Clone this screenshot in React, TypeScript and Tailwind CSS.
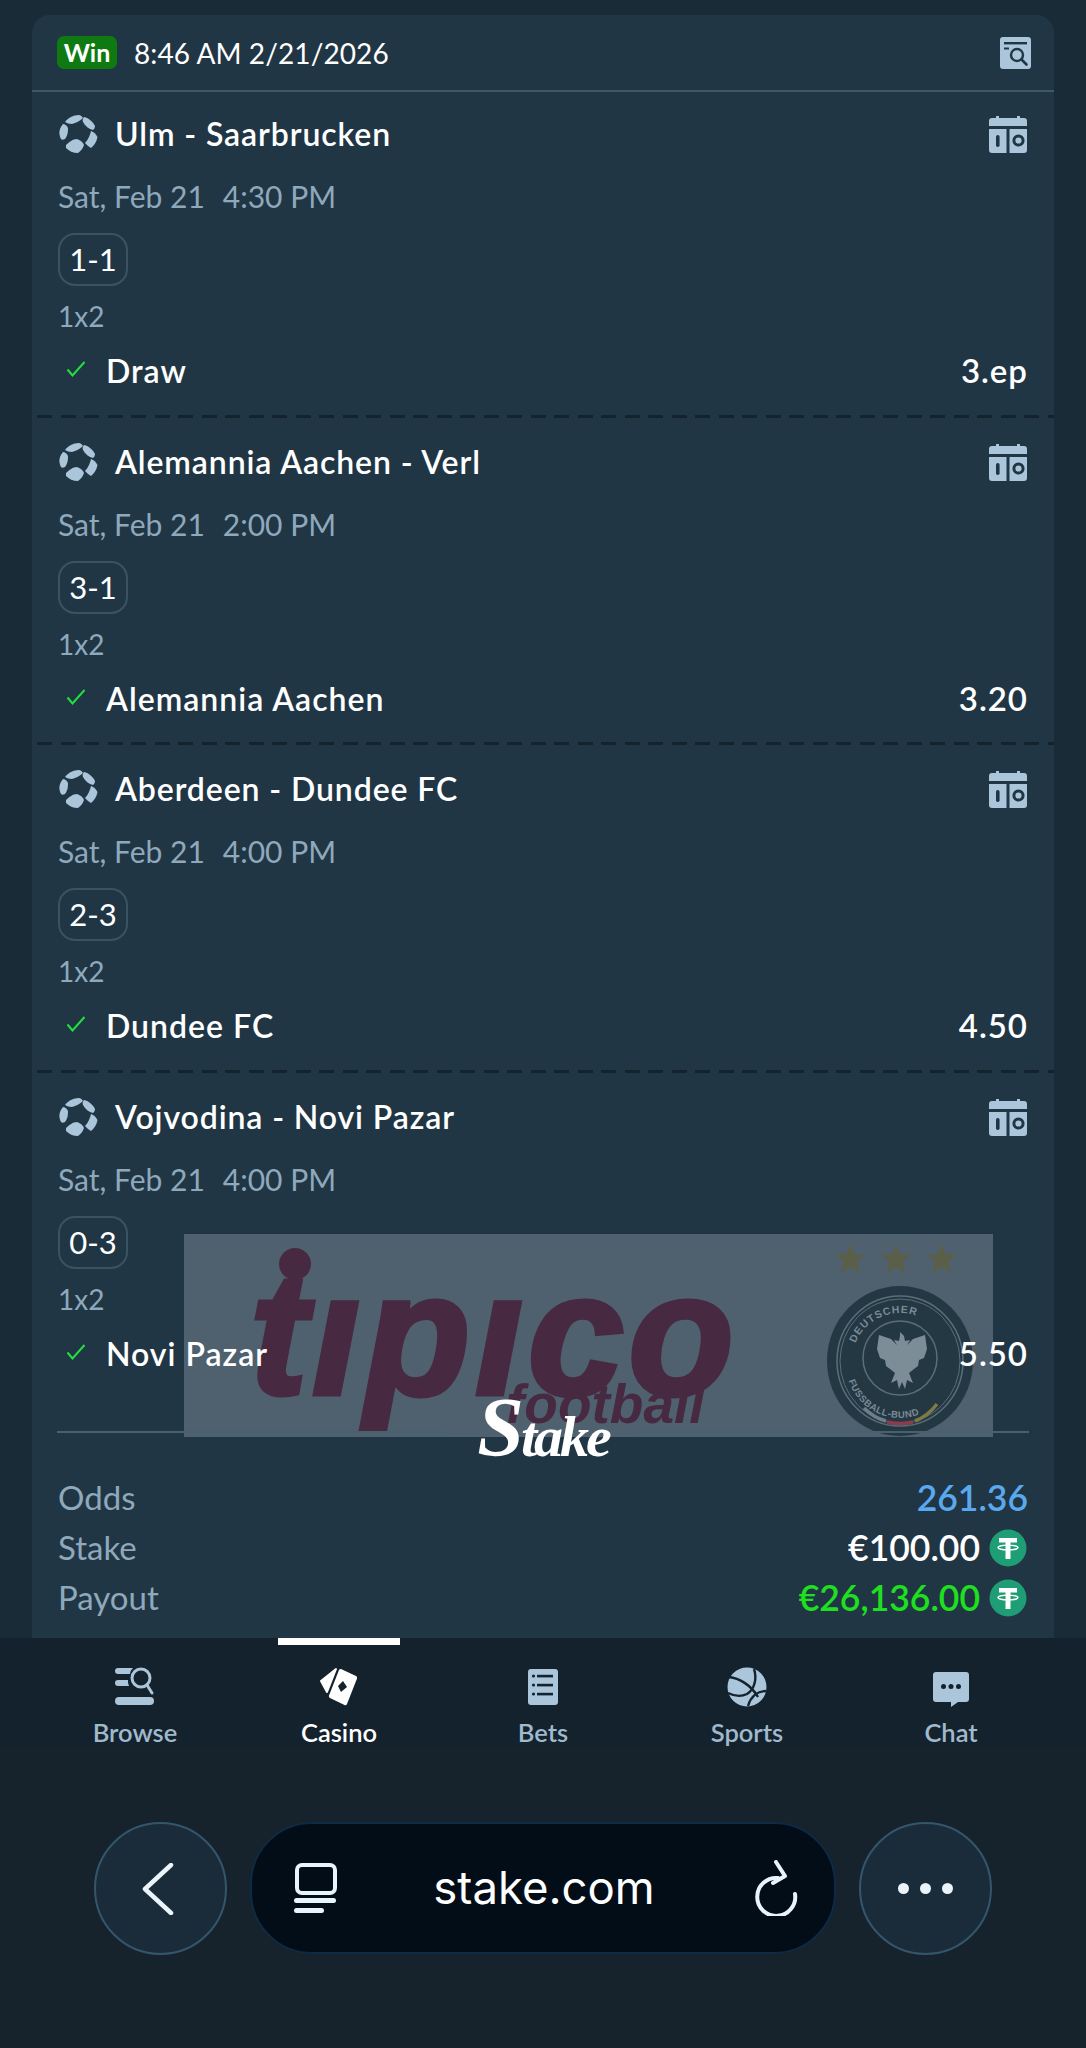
const font = "[font-family:Lato,'Noto_Sans',sans-serif]";

const bets = [
  { title: "Ulm - Saarbrucken", time: "4:30 PM", score: "1-1", pick: "Draw", odds: "3.ep" },
  { title: "Alemannia Aachen - Verl", time: "2:00 PM", score: "3-1", pick: "Alemannia Aachen", odds: "3.20" },
  { title: "Aberdeen - Dundee FC", time: "4:00 PM", score: "2-3", pick: "Dundee FC", odds: "4.50" },
  { title: "Vojvodina - Novi Pazar", time: "4:00 PM", score: "0-3", pick: "Novi Pazar", odds: "5.50" },
];

function SoccerBall() {
  return (
    <svg width="40" height="40" viewBox="0 0 40 40" className="shrink-0">
      <g fill="#abc5da">
        <path d="M7 8c3-4 8-7 14-7 1 0 3 1 4 3-3 3-7 5-11 6-3 0-5-1-7-2z" />
        <path d="M26 3c5 1 9 5 11 9 0 2-1 3-2 4-4-1-8-4-10-8-1-2 0-4 1-5z" />
        <path d="M33 17c3 1 5 3 6.500 6-1 5-3 8-6.500 11-2-1-4-3-6-5 3-3 5-8 6-12z" />
        <path d="M8 31c3-3 7-6 11-6 3 1 6 3 7 6-1 3-3 6-6 8-5 0-9-2-12-5z" />
        <path d="M5 10c2 0 4 2 5 4 0 3 0 7-3 11-2 1-3 1-4 0-2-4-3-9 2-15z" />
      </g>
    </svg>
  );
}

function CalendarScore() {
  return (
    <svg width="40" height="40" viewBox="0 0 40 40" className="shrink-0">
      <path d="M8 2h3v2h18V2h3v2h4a3 3 0 0 1 3 3v5H1V7a3 3 0 0 1 3-3h4z" fill="#abc5da" />
      <path d="M1 15h17.500v24H4a3 3 0 0 1-3-3z" fill="#abc5da" />
      <path d="M21.500 15H39v21a3 3 0 0 1-3 3H21.500z" fill="#abc5da" />
      <rect x="8" y="21" width="3.600" height="12" rx="1.800" fill="#213644" />
      <circle cx="30.500" cy="26.500" r="4.600" fill="none" stroke="#213644" strokeWidth="3" />
    </svg>
  );
}

function ReceiptSearch() {
  return (
    <svg width="31" height="32" viewBox="0 0 31 32">
      <rect width="31" height="32" rx="3" fill="#abc5da" />
      <rect x="4" y="5" width="23" height="2.400" fill="#213644" />
      <rect x="4" y="10.500" width="5" height="2" fill="#213644" />
      <circle cx="17" cy="18" r="6" fill="none" stroke="#213644" strokeWidth="2.400" />
      <path d="M21.500 22.500l5 5" stroke="#213644" strokeWidth="2.600" strokeLinecap="round" />
    </svg>
  );
}

function Tether() {
  return (
    <svg width="38" height="38" viewBox="0 0 38 38" className="shrink-0 mr-[1px]">
      <circle cx="19" cy="19" r="18.500" fill="#1f9e75" />
      <path d="M10 9h18v4.500h-6.500V30h-5V13.500H10z" fill="#fff" />
      <ellipse cx="19" cy="18.500" rx="10" ry="2.400" fill="none" stroke="#fff" strokeWidth="1.400" />
    </svg>
  );
}

function BrowseIcon() {
  return (
    <svg width="40" height="40" viewBox="0 0 40 40">
      <g fill="#abc5da">
        <path d="M3 1h15a9 9 0 0 0-3 6H3a3 3 0 0 1 0-6z" />
        <path d="M3 13h10a12 12 0 0 0 1 6H3a3 3 0 0 1 0-6z" />
        <rect x="0" y="30" width="39" height="8" rx="4" />
      </g>
      <circle cx="26" cy="11" r="9" fill="none" stroke="#abc5da" strokeWidth="3" />
      <path d="M32 18l5 8" stroke="#abc5da" strokeWidth="3" strokeLinecap="round" />
    </svg>
  );
}

function CasinoIcon() {
  return (
    <svg width="40" height="40" viewBox="0 0 40 40">
      <path d="M2 14L17 2 8 25z" fill="#fff" stroke="#fff" strokeWidth="2" strokeLinejoin="round" />
      <path d="M22 2l15 7a2 2 0 0 1 1 2.500L28 37a2 2 0 0 1-2.500 1L11 31a2 2 0 0 1-1-2.500L20 3a2 2 0 0 1 2-1z" fill="#fff" />
      <path d="M24 14l4 6-6 5-3-6z" fill="#14222e" />
    </svg>
  );
}

function BetsIcon() {
  return (
    <svg width="40" height="40" viewBox="0 0 40 40">
      <rect x="5" y="2" width="30" height="36" rx="3" fill="#abc5da" />
      <g fill="#14222e">
        <circle cx="10.500" cy="9" r="1.600" />
        <circle cx="10.500" cy="18" r="1.600" />
        <circle cx="10.500" cy="27" r="1.600" />
        <rect x="14" y="7.800" width="16" height="2.600" />
        <rect x="14" y="16.800" width="16" height="2.600" />
        <rect x="14" y="25.800" width="16" height="2.600" />
      </g>
    </svg>
  );
}

function SportsIcon() {
  return (
    <svg width="40" height="40" viewBox="0 0 40 40">
      <circle cx="20" cy="20" r="19.500" fill="#abc5da" />
      <g fill="none" stroke="#14222e" strokeWidth="2.400">
        <path d="M2 10c10 1 22 8 29 20" />
        <path d="M27 2c3 9 1 20-7 25-6 3-13 2-19-1" />
        <path d="M39 24c-8 0-15 5-18 15" />
      </g>
    </svg>
  );
}

function ChatIcon() {
  return (
    <svg width="40" height="40" viewBox="0 0 40 40">
      <path d="M5 5h30a3 3 0 0 1 3 3v24a3 3 0 0 1-3 3h-8l-7 5v-5H5a3 3 0 0 1-3-3V8a3 3 0 0 1 3-3z" fill="#abc5da" />
      <circle cx="12.500" cy="19.500" r="2.500" fill="#14222e" />
      <circle cx="20" cy="19.500" r="2.500" fill="#14222e" />
      <circle cx="27.500" cy="19.500" r="2.500" fill="#14222e" />
    </svg>
  );
}

function Crest() {
  return (
    <svg width="146" height="150" viewBox="0 0 146 150">
      <defs>
        <path id="crest-top" d="M25 75a48 48 0 0 1 96 0" />
        <path id="crest-bottom" d="M19 78a54 54 0 0 0 108 0" />
      </defs>
      <ellipse cx="73" cy="75" rx="73" ry="75" fill="#243844" />
      <ellipse cx="73" cy="75" rx="63" ry="65" fill="none" stroke="#5a6e7a" strokeWidth="1.500" />
      <ellipse cx="73" cy="75" rx="60" ry="62" fill="none" stroke="#5a6e7a" strokeWidth="1" />
      <circle cx="73" cy="72" r="37" fill="none" stroke="#5a6e7a" strokeWidth="1.500" />
      <text fontSize="10.500" fontWeight="700" fill="#7a8b95" letterSpacing="1" className="font-['Liberation_Sans']">
        <textPath href="#crest-top" startOffset="12%">DEUTSCHER</textPath>
      </text>
      <text fontSize="9.500" fontWeight="700" fill="#7a8b95" letterSpacing="0.500" className="font-['Liberation_Sans']">
        <textPath href="#crest-bottom" startOffset="10%">FUSSBALL-BUND</textPath>
      </text>
      <path d="M73 46l4 4 1 5 5-1-3 5 6-6 12-4 2 14-3 9-5 2-1 6-4 3-5 4 4 10-6-3-2 9-3-7-3 7-2-9-6 3 4-10-5-4-4-3-1-6-5-2-3-9 2-14 12 4 6 6-3-5 5 1 1-5z" fill="#7c8d97" />
      <path d="M37 122q10 10 22 13" fill="none" stroke="#6d7f8a" strokeWidth="3.500" />
      <path d="M60 136q13 3 26 0" fill="none" stroke="#8a3c4a" strokeWidth="3.500" />
      <path d="M88 135q13-5 22-17" fill="none" stroke="#7e7a43" strokeWidth="3.500" />
    </svg>
  );
}

function Stars() {
  const star = "M15 0l4 10.500 11 .5-8.500 7 3 11-9.500-6-9.500 6 3-11L0 11l11-.5z";
  return (
    <svg width="122" height="30" viewBox="0 0 122 30">
      <path d={star} fill="#5c5f48" />
      <path d={star} transform="translate(46)" fill="#5c5f48" />
      <path d={star} transform="translate(92)" fill="#5c5f48" />
    </svg>
  );
}

function BetRow({ bet, last }: { bet: (typeof bets)[0]; last: boolean }) {
  return (
    <div className={last ? "h-[326.500px]" : "h-[327.500px] relative"}>
      <div className="px-[26px] pt-[22px]">
        <div className="flex items-center h-10">
          <SoccerBall />
          <span className="ml-[17px] text-[32px] font-semibold text-white tracking-[0.9px]">{bet.title}</span>
          <span className="ml-auto"><CalendarScore /></span>
        </div>
        <div className="mt-[24px] h-9 leading-9 text-[30px] text-[#8fa9bc] flex gap-[18px]">
          <span>Sat, Feb 21</span>
          <span>{bet.time}</span>
        </div>
        <div className="mt-[19px] w-[70px] h-[53px] rounded-[17px] border-2 border-[#3a5362] flex items-center justify-center text-[31px] text-white">{bet.score}</div>
        <div className="mt-[12px] h-9 leading-9 text-[28px] text-[#8fa9bc]">1x2</div>
        <div className="mt-[17px] h-10 flex items-center relative z-10">
          <svg width="20" height="16" viewBox="0 0 20 16" className="ml-[8px] mb-[4px]">
            <path d="M1.500 8.500l5 6L18.500 1" fill="none" stroke="#1fe03c" strokeWidth="2" />
          </svg>
          <span className="ml-[20px] text-[32px] font-semibold text-white tracking-[1px]">{bet.pick}</span>
          <span className="ml-auto text-[33px] font-semibold text-white tracking-[1px]">{bet.odds}</span>
        </div>
      </div>
      {!last && (
        <div className="absolute bottom-[2px] left-[5px] right-0 h-[3px] bg-[repeating-linear-gradient(90deg,#14242f_0,#14242f_15px,transparent_15px,transparent_23.500px)]" />
      )}
    </div>
  );
}

function Summary({ label, children }: { label: string; children: React.ReactNode }) {
  return (
    <div className="h-[50px] flex items-center justify-between">
      <span className="text-[#8fa9bc] text-[33px]">{label}</span>
      <span className="flex items-center gap-[9px] font-semibold text-[35.500px]">{children}</span>
    </div>
  );
}

const navItems = [
  { label: "Browse", icon: <BrowseIcon /> },
  { label: "Casino", icon: <CasinoIcon />, active: true },
  { label: "Bets", icon: <BetsIcon /> },
  { label: "Sports", icon: <SportsIcon /> },
  { label: "Chat", icon: <ChatIcon /> },
];

export default function App() {
  return (
    <div className={`w-[1086px] h-[2048px] flex flex-col overflow-hidden bg-[#14222e] ${font}`}>
      {/* Bet slip */}
      <div className="h-[1638px] shrink-0 bg-[#1a2b38] px-[32px] pt-[15px]">
        <div className="relative h-[1623px] rounded-t-[18px] bg-[#213645]">
          <div className="h-[77px] border-b-2 border-[#3c5a69] flex items-center pl-[25px] pr-[23px]">
            <span className="w-[60px] h-[33px] rounded-[7px] bg-[#0f7a12] flex items-center justify-center text-[25px] font-bold text-white">Win</span>
            <span className="ml-[17px] text-[28px] text-white tracking-[0.1px]">8:46 AM 2/21/2026</span>
            <span className="ml-auto flex"><ReceiptSearch /></span>
          </div>
          {bets.map((bet, i) => (
            <BetRow key={bet.title} bet={bet} last={i === bets.length - 1} />
          ))}
          <div className="ml-[25px] mr-[25px] h-[62px] flex items-center relative z-10">
            <div className="flex-1 h-[2px] bg-[#46616f]" />
            <span className="w-[192px] text-center text-[58px] leading-[62px] font-bold italic text-white tracking-[-3px] font-['Liberation_Serif']"><span className="text-[84px]">S</span>take</span>
            <div className="flex-1 h-[2px] bg-[#46616f]" />
          </div>
          <div className="mt-[10px] ml-[26px] mr-[26px]">
            <Summary label="Odds"><span className="text-[#5aa9ee]">261.36</span></Summary>
            <Summary label="Stake"><span className="text-white">€100.00</span><Tether /></Summary>
            <Summary label="Payout"><span className="text-[#1fe01f]">€26,136.00</span><Tether /></Summary>
          </div>

          {/* Sponsor banner lying over the slip */}
          <div className="absolute left-[152px] top-[1219px] w-[809px] h-[203px] bg-[#b9c7d2]/30 overflow-hidden">
            <div className="absolute left-[95px] top-[14px] w-[32px] h-[32px] rounded-full bg-[#472a42]" />
            <span className="absolute left-[66px] top-[14px] text-[172px] leading-[172px] font-bold italic text-[#472a42] [-webkit-text-stroke:5px_#472a42] tracking-[5px] font-['Liberation_Sans']">tıpıco</span>
            <span className="absolute left-[322px] top-[142px] text-[55px] leading-[56px] font-bold italic text-[#472a42] font-['Liberation_Sans']">football</span>
            <span className="absolute left-[651px] top-[10px] flex"><Stars /></span>
            <span className="absolute left-[643px] top-[52px] flex"><Crest /></span>
          </div>
        </div>
      </div>

      {/* Bottom tabs */}
      <div className="px-[33px] grid grid-cols-5 shrink-0">
        {navItems.map((item) => (
          <div key={item.label} className="flex flex-col items-center">
            <div className={item.active ? "w-[122px] h-[7px] bg-white" : "w-[122px] h-[7px]"} />
            <div className="mt-[22px] h-10 flex">{item.icon}</div>
            <div className={item.active ? "mt-[10px] h-[30px] leading-[30px] text-[25.500px] font-semibold text-white" : "mt-[10px] h-[30px] leading-[30px] text-[25.500px] font-semibold text-[#a0bacd]"}>{item.label}</div>
          </div>
        ))}
      </div>

      {/* Browser controls */}
      <div className="flex-1 bg-[#16232d] flex items-start gap-[23px] pl-[94px] pt-[75px]">
        <button className="w-[133px] h-[133px] rounded-full bg-[#1a2c3a] border-2 border-[#34566d] flex items-center justify-center">
          <svg width="32" height="52" viewBox="0 0 32 52" className="mr-[6px]"><path d="M29 2L3 26l26 24" fill="none" stroke="#eaf4fa" strokeWidth="4.500" strokeLinecap="round" strokeLinejoin="round" /></svg>
        </button>
        <div className="w-[586px] h-[132px] rounded-[62px] bg-[#020d18] border-2 border-[#0e2a44] flex items-center pl-[42px] pr-[36px]">
          <svg width="44" height="50" viewBox="0 0 44 50" className="shrink-0">
            <rect x="3" y="2" width="38" height="28" rx="5" fill="none" stroke="#e8f4fb" strokeWidth="4" />
            <rect x="0" y="35" width="42" height="5" rx="2.500" fill="#e8f4fb" />
            <rect x="0" y="45" width="30" height="5" rx="2.500" fill="#e8f4fb" />
          </svg>
          <span className="flex-1 text-center text-[45.500px] pr-[4px] font-['Inter'] text-white">stake.com</span>
          <svg width="44" height="56" viewBox="0 0 44 56" className="shrink-0">
            <path d="M24 13a19 19 0 1 0 17 16" fill="none" stroke="#e8f4fb" strokeWidth="4" strokeLinecap="round" transform="translate(0 5)" />
            <path d="M22 2l9 14-12 7" fill="none" stroke="#e8f4fb" strokeWidth="4" strokeLinecap="round" strokeLinejoin="round" />
          </svg>
        </div>
        <button className="w-[133px] h-[133px] rounded-full bg-[#1a2c3a] border-2 border-[#34566d] flex items-center justify-center gap-[11px]">
          <span className="w-[11px] h-[11px] rounded-full bg-[#eaf4fa]" />
          <span className="w-[11px] h-[11px] rounded-full bg-[#eaf4fa]" />
          <span className="w-[11px] h-[11px] rounded-full bg-[#eaf4fa]" />
        </button>
      </div>
    </div>
  );
}
